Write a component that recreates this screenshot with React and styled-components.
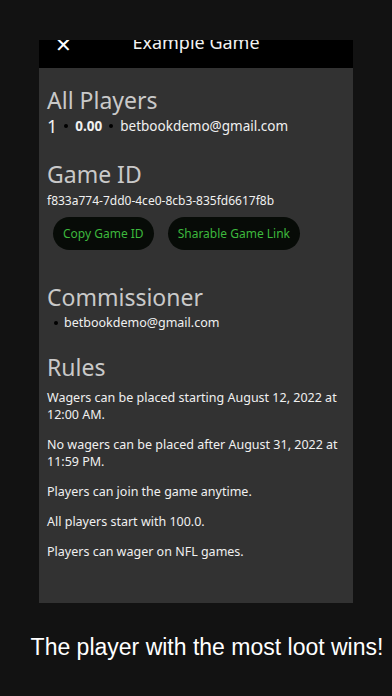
import React from 'react'
import styled, { createGlobalStyle } from 'styled-components'

const Global = createGlobalStyle`
  html, body {
    margin: 0;
    padding: 0;
    background: #121212;
  }
  body {
    width: 392px;
    height: 696px;
    overflow: hidden;
  }
`;

const Page = styled.div`
  width: 392px;
  height: 696px;
  background: #121212;
  display: flex;
  flex-direction: column;
  align-items: center;
  padding-top: 40px;
  box-sizing: border-box;
`;

const Screen = styled.div`
  width: 314px;
  height: 563px;
  background: #323232;
  display: flex;
  flex-direction: column;
  overflow: hidden;
  font-family: "Noto Sans", "Open Sans", sans-serif;
`;

const Header = styled.div`
  height: 28px;
  background: #000;
  display: flex;
  align-items: flex-start;
  justify-content: center;
  overflow: hidden;
  position: relative;
  flex-shrink: 0;
`;

const Close = styled.span`
  position: absolute;
  left: 16px;
  top: -5px;
  color: #fff;
  font-size: 20px;
  line-height: 20px;
`;

const Title = styled.span`
  color: #f2f2f2;
  font-size: 18px;
  line-height: 20px;
  margin-top: -8px;
`;

const Body = styled.div`
  padding: 18px 8px 0 8px;
  display: flex;
  flex-direction: column;
`;

const Heading = styled.h2`
  margin: ${p => p.$top || 0}px 0 0 0;
  font-weight: 400;
  font-size: 23px;
  line-height: 28px;
  color: #c9c9c9;
`;

const PlayerRow = styled.div`
  display: flex;
  align-items: center;
  gap: 7px;
  margin-top: 2px;
  color: #f0f0f0;
  font-size: 13.5px;
  line-height: 20px;
`;

const Rank = styled.span`
  font-size: 18px;
`;

const Score = styled.span`
  font-weight: 700;
`;

const Dot = styled.span`
  width: 4px;
  height: 4px;
  border-radius: 50%;
  background: #000;
`;

const Mono = styled.div`
  color: #f0f0f0;
  font-size: 12px;
  line-height: 18px;
  margin-top: 4px;
`;

const Buttons = styled.div`
  display: flex;
  gap: 14px;
  padding-left: 6px;
  margin-top: 7px;
`;

const Pill = styled.button`
  height: 33px;
  padding: 0 10px;
  border-radius: 17px;
  border: none;
  background: #070b07;
  color: #3db83d;
  font-family: inherit;
  font-size: 12px;
`;

const List = styled.ul`
  margin: 3px 0 0 0;
  padding-left: 7px;
  list-style: none;
`;

const Item = styled.li`
  display: flex;
  align-items: center;
  gap: 6px;
  color: #f0f0f0;
  font-size: 12.5px;
  line-height: 18px;
`;

const Rule = styled.p`
  margin: 0 0 13px 0;
  color: #f0f0f0;
  font-size: 12.5px;
  line-height: 17px;
`;

const Rules = styled.div`
  margin-top: 8px;
`;

const Caption = styled.div`
  margin-top: 31px;
  color: #fff;
  font-family: "Liberation Sans", Arial, sans-serif;
  font-size: 23px;
  white-space: nowrap;
  text-align: center;
  width: 392px;
  padding-left: 22px;
  box-sizing: border-box;
`;

const rules = [
  'Wagers can be placed starting August 12, 2022 at 12:00 AM.',
  'No wagers can be placed after August 31, 2022 at 11:59 PM.',
  'Players can join the game anytime.',
  'All players start with 100.0.',
  'Players can wager on NFL games.',
];

export default function App() {
  return (
    <Page>
      <Global />
      <Screen>
        <Header>
          <Close>✕</Close>
          <Title>Example Game</Title>
        </Header>
        <Body>
          <Heading>All Players</Heading>
          <PlayerRow>
            <Rank>1</Rank>
            <Dot />
            <Score>0.00</Score>
            <Dot />
            <span>betbookdemo@gmail.com</span>
          </PlayerRow>

          <Heading $top={24}>Game ID</Heading>
          <Mono>f833a774-7dd0-4ce0-8cb3-835fd6617f8b</Mono>
          <Buttons>
            <Pill>Copy Game ID</Pill>
            <Pill>Sharable Game Link</Pill>
          </Buttons>

          <Heading $top={33}>Commissioner</Heading>
          <List>
            <Item><Dot />betbookdemo@gmail.com</Item>
          </List>

          <Heading $top={21}>Rules</Heading>
          <Rules>
            {rules.map(r => <Rule key={r}>{r}</Rule>)}
          </Rules>
        </Body>
      </Screen>
      <Caption>The player with the most loot wins!</Caption>
    </Page>
  );
}
